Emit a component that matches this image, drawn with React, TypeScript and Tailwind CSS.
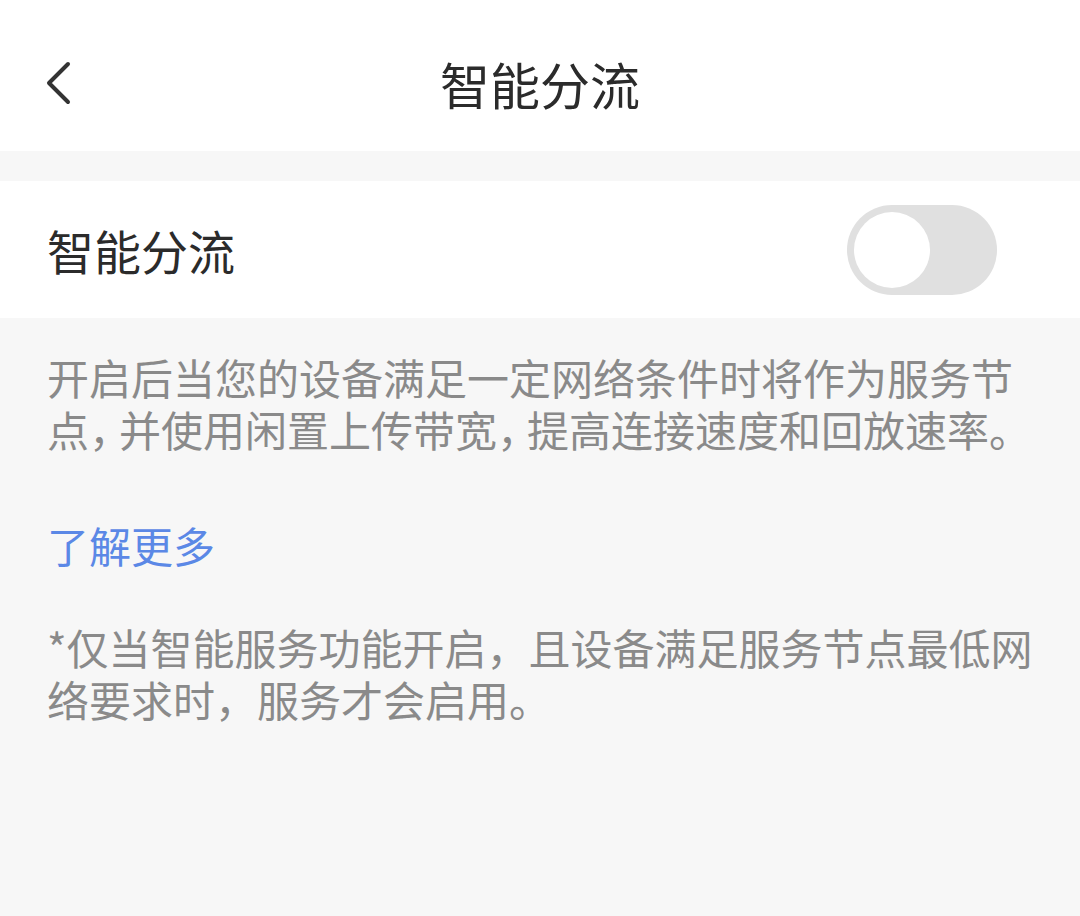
import React, { useState } from 'react';

export default function App() {
  const [enabled, setEnabled] = useState(false);

  return (
    <main className="min-h-[916px] w-full bg-[#f7f7f7] font-['Noto_Sans_CJK_SC','Noto_Sans',sans-serif]">
      {/* Header */}
      <header className="h-[151px] bg-white pt-[14px] grid grid-cols-[1fr_auto_1fr] items-center px-[44px]">
        <button className="w-[40px] h-[48px] flex items-center text-[#333]" aria-label="返回">
          <svg width="28" height="46" viewBox="0 0 28 46" fill="none">
            <path d="M24 4 L5 23 L24 42" stroke="currentColor" strokeWidth="4" strokeLinecap="round" strokeLinejoin="round" />
          </svg>
        </button>
        <h1 className="text-[50px] leading-none text-[#2b2b2b]">智能分流</h1>
        <div />
      </header>

      <div className="h-[30px]" />

      {/* Toggle row */}
      <div className="h-[137px] bg-white flex items-center justify-between pl-[47px] pr-[83px]">
        <span className="text-[47px] leading-none text-[#2b2b2b]">智能分流</span>
        <button
          onClick={() => setEnabled(!enabled)}
          className={`w-[150px] h-[90px] rounded-full p-[7px] flex items-center transition-colors ${enabled ? 'bg-[#3b7cf0] justify-end' : 'bg-[#e0e0e0] justify-start'}`}
          aria-label="智能分流开关"
        >
          <span className="w-[76px] h-[76px] rounded-full bg-white block" />
        </button>
      </div>

      {/* Description */}
      <div className="px-[47px] pt-[33px] text-[42px] leading-[52px] text-[#8a8a8a]">
        <p className="whitespace-nowrap">
          开启后当您的设备满足一定网络条件时将作为服务节
          <br />
          点<span className="[font-feature-settings:'halt'] pr-[9px]">，</span>并使用闲置上传带宽<span className="[font-feature-settings:'halt'] pr-[9px]">，</span>提高连接速度和回放速率。
        </p>
        <p className="mt-[64px] text-[#5b88e6]">了解更多</p>
        <p className="mt-[50px] whitespace-nowrap">
          *仅当智能服务功能开启，且设备满足服务节点最低网
          <br />
          络要求时，服务才会启用。
        </p>
      </div>
    </main>
  );
}
